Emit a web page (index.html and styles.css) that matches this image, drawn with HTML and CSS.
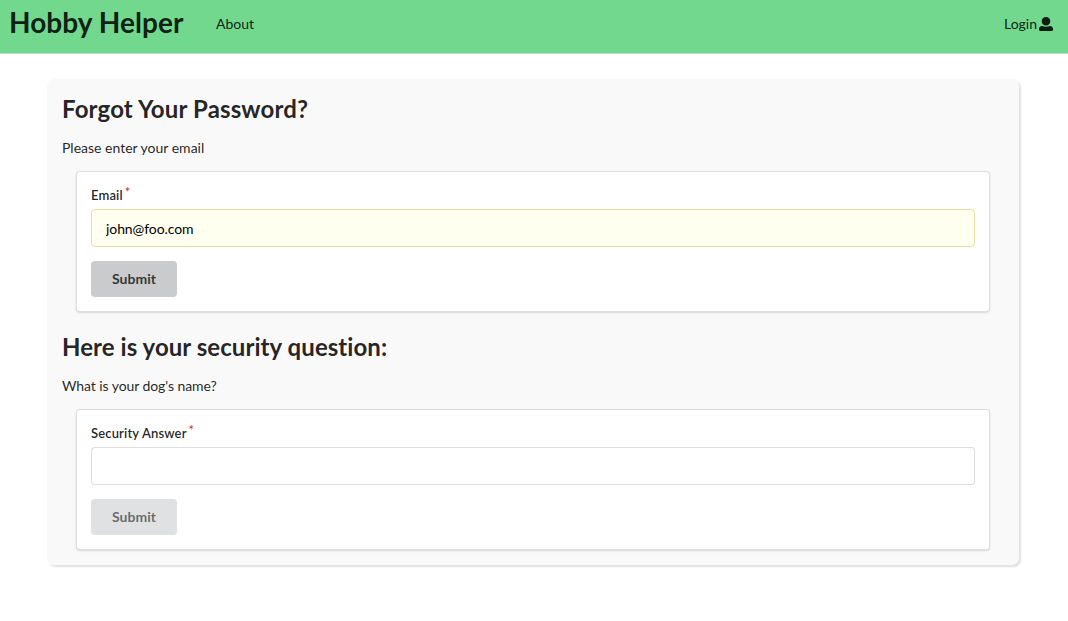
FILE: index.html
```html
<!DOCTYPE html>
<html lang="en">
<head>
<meta charset="utf-8">
<title>Hobby Helper</title>
<link rel="stylesheet" href="styles.css">
</head>
<body>
<nav class="navbar">
  <h1 class="brand">Hobby Helper</h1>
  <a class="nav-link">About</a>
  <a class="login">Login<svg class="user-icon" viewBox="0 0 14 14"><path d="M7 0C4.500 0 2.700 1.700 2.700 4.200S4.500 8.500 7 8.500s4.300-1.800 4.300-4.300S9.500 0 7 0zM3 9C1.200 9.200 0 10.300 0 12v.8c0 .7.500 1.200 1.200 1.200h11.600c.7 0 1.200-.5 1.200-1.200V12c0-1.700-1.200-2.800-3-3-1.100.5-2.500.8-4 .8S4.100 9.500 3 9z"/></svg></a>
</nav>
<main class="card">
  <section class="block">
    <h2 class="title">Forgot Your Password?</h2>
    <p class="hint">Please enter your email</p>
    <form class="segment">
      <label class="label" for="email">Email<span class="star">*</span></label>
      <input class="input filled" id="email" type="text" value="john@foo.com">
      <button class="button" type="button">Submit</button>
    </form>
  </section>
  <section class="block">
    <h2 class="title question">Here is your security question:</h2>
    <p class="hint question-text">What is your dog's name?</p>
    <form class="segment">
      <label class="label" for="answer">Security Answer<span class="star">*</span></label>
      <input class="input" id="answer" type="text">
      <button class="button disabled" type="button">Submit</button>
    </form>
  </section>
</main>
</body>
</html>
```
FILE: styles.css
```css
* { box-sizing: border-box; }
body {
  min-height: 100vh;
  margin: 0;
  background: #fff;
  color: rgba(0, 0, 0, .87);
  font: 14px/20px Lato, sans-serif;
}
.navbar {
  display: flex;
  height: 54px;
  padding: 0 15px 0 9px;
  background: #71d88d;
  border-bottom: 1px solid #c5dccb;
}
.brand {
  width: 175px;
  margin: 4px 32px 0 0;
  font-size: 28px;
  line-height: 36px;
  font-weight: 700;
  letter-spacing: .06px;
  white-space: nowrap;
}
.nav-link, .login { margin-top: 14px; }
.login { display: flex; margin-left: auto; }
.user-icon {
  width: 14px;
  height: 14px;
  margin: 3px 0 0 2px;
  fill: rgba(0, 0, 0, .87);
}
.card {
  width: 972px;
  height: 486px;
  margin: 25px 0 0 47px;
  padding: 14px 29px 0 15px;
  background: #f9f9f9;
  border-radius: 7px;
  box-shadow: 2px 2px 2px rgba(0, 0, 0, .12);
}
.block { height: 238px; }
.title {
  margin: 0;
  font-size: 24px;
  line-height: 31px;
  font-weight: 700;
  letter-spacing: .14px;
}
.question { letter-spacing: .06px; }
.hint { margin: 14px 0 13px; }
.question-text { letter-spacing: -.08px; }
.segment {
  display: flex;
  flex-direction: column;
  align-items: flex-start;
  height: 141px;
  margin: 0 0 0 14px;
  padding: 14px;
  background: #fff;
  border: 1px solid rgba(34, 36, 38, .15);
  border-radius: 4px;
  box-shadow: 0 1px 2px rgba(34, 36, 38, .15);
}
.label {
  height: 23px;
  font-size: 13px;
  line-height: 19px;
  font-weight: 600;
  letter-spacing: .15px;
}
.star {
  margin-left: 2px;
  color: #db2828;
  font-size: 13px;
  font-weight: 400;
  vertical-align: 3px;
  line-height: 0;
}
.input {
  width: 100%;
  height: 38px;
  margin: 0 0 14px;
  padding: 0 14px;
  border: 1px solid rgba(34, 36, 38, .15);
  border-radius: 4px;
  background: #fff;
  color: rgba(0, 0, 0, .87);
  font: 14px Lato, sans-serif;
  letter-spacing: -.08px;
}
.filled { background: #fffff0; border-color: #e5dfa1; color: #000; }
.button {
  width: 86px;
  height: 36px;
  padding: 0 0 2px;
  border: 0;
  border-radius: 4px;
  background: #cacbcd;
  color: rgba(0, 0, 0, .75);
  font: 700 14px Lato, sans-serif;
}
.disabled { background: #e0e1e2; color: rgba(0, 0, 0, .55); }
```
